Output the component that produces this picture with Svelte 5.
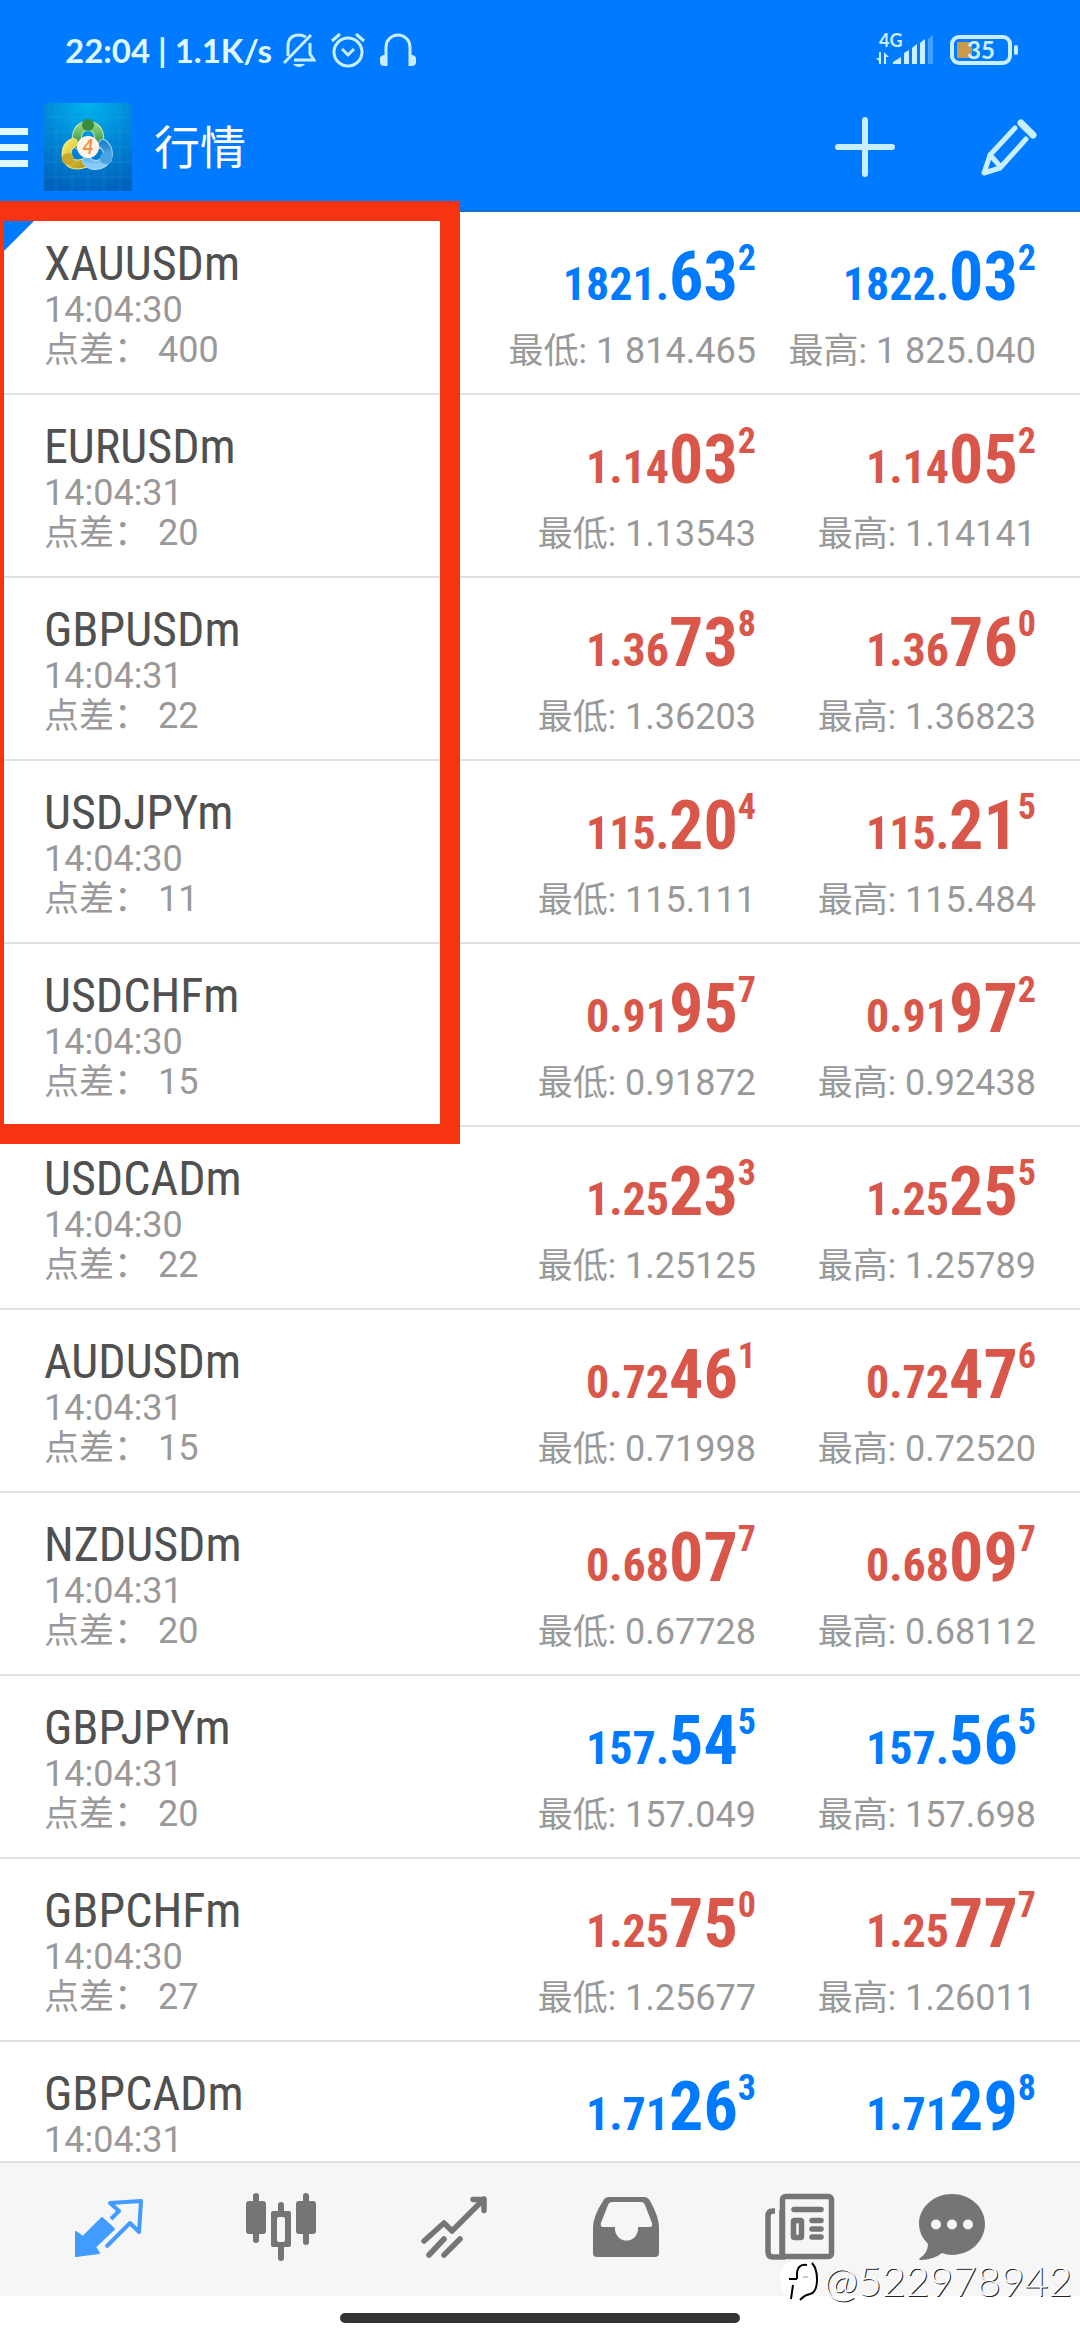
<script>
    const quotes = [
        { symbol: 'XAUUSDm', time: '14:04:30', spread: 400, up: true, bid: ['1821.', '63', '2'], ask: ['1822.', '03', '2'], low: '1 814.465', high: '1 825.040' },
        { symbol: 'EURUSDm', time: '14:04:31', spread: 20, up: false, bid: ['1.14', '03', '2'], ask: ['1.14', '05', '2'], low: '1.13543', high: '1.14141' },
        { symbol: 'GBPUSDm', time: '14:04:31', spread: 22, up: false, bid: ['1.36', '73', '8'], ask: ['1.36', '76', '0'], low: '1.36203', high: '1.36823' },
        { symbol: 'USDJPYm', time: '14:04:30', spread: 11, up: false, bid: ['115.', '20', '4'], ask: ['115.', '21', '5'], low: '115.111', high: '115.484' },
        { symbol: 'USDCHFm', time: '14:04:30', spread: 15, up: false, bid: ['0.91', '95', '7'], ask: ['0.91', '97', '2'], low: '0.91872', high: '0.92438' },
        { symbol: 'USDCADm', time: '14:04:30', spread: 22, up: false, bid: ['1.25', '23', '3'], ask: ['1.25', '25', '5'], low: '1.25125', high: '1.25789' },
        { symbol: 'AUDUSDm', time: '14:04:31', spread: 15, up: false, bid: ['0.72', '46', '1'], ask: ['0.72', '47', '6'], low: '0.71998', high: '0.72520' },
        { symbol: 'NZDUSDm', time: '14:04:31', spread: 20, up: false, bid: ['0.68', '07', '7'], ask: ['0.68', '09', '7'], low: '0.67728', high: '0.68112' },
        { symbol: 'GBPJPYm', time: '14:04:31', spread: 20, up: true, bid: ['157.', '54', '5'], ask: ['157.', '56', '5'], low: '157.049', high: '157.698' },
        { symbol: 'GBPCHFm', time: '14:04:30', spread: 27, up: false, bid: ['1.25', '75', '0'], ask: ['1.25', '77', '7'], low: '1.25677', high: '1.26011' },
        { symbol: 'GBPCADm', time: '14:04:31', up: true, bid: ['1.71', '26', '3'], ask: ['1.71', '29', '8'] }
    ];

    let tab = $state('quotes');
</script>

{#snippet price(parts, label, value)}
    <div class="price">
        <span class="lead">{parts[0]}</span><span class="pips">{parts[1]}</span><span class="point">{parts[2]}</span>
    </div>
    {#if value}
        <div class="range"><span class="label">{label}:</span> {value}</div>
    {/if}
{/snippet}

<div class="app">
    <header>
        <div class="status">
            <span class="clock">22:04 | 1.1K/s</span>
            <svg class="bell" width="34" height="36" viewBox="0 0 34 36" fill="none" stroke="currentColor" stroke-width="3">
                <path d="M6 24V14C6 6 11 3 17 3c3 0 5 1 7 2M28 11v11l4 6H12" />
                <path d="M2 31 29 3" />
                <path d="M11 32h12c-3 4-9 4-12 0z" fill="currentColor" stroke="none" />
            </svg>
            <svg class="alarm" width="36" height="36" viewBox="0 0 36 36" fill="none" stroke="currentColor" stroke-width="3">
                <circle cx="18" cy="20" r="14" />
                <path d="M2 9l8-7M34 9l-8-7M12 17l6 6 6-6" />
            </svg>
            <svg class="phones" width="36" height="36" viewBox="0 0 36 36" fill="none" stroke="currentColor" stroke-width="3">
                <path d="M6 34V15a12 12 0 0 1 24 0v19" />
                <path d="M7 23v11H5c-3 0-5-1-5-4v-3c0-3 2-4 5-4zM29 23v11h2c3 0 5-1 5-4v-3c0-3-2-4-5-4z" fill="currentColor" stroke="none" />
            </svg>
            <div class="network">
                <span class="lte">4G</span>
                <svg width="58" height="30" viewBox="0 0 58 30" fill="currentColor">
                    <path d="M3 17h2v12H3v-3l-3-3h3zM8 17l5 5h-3v7H8z" />
                    <path d="M17 29v-2l8-5v7zM28 29V18l5-3v14zM36 29V13l5-4v20zM44 29V8l5-4v25z" />
                    <path d="M52 29V4l5-4v29z" opacity=".35" />
                </svg>
            </div>
            <div class="battery"><span>35</span></div>
        </div>
        <div class="toolbar">
            <button class="menu" aria-label="菜单"><i></i><i></i><i></i></button>
            <svg class="logo" width="88" height="88" viewBox="0 0 88 88">
                <defs>
                    <radialGradient id="bg" cx=".5" cy="0" r="1">
                        <stop offset="0" stop-color="#00b4ec" />
                        <stop offset=".5" stop-color="#0089d8" />
                        <stop offset="1" stop-color="#0064bd" />
                    </radialGradient>
                    <linearGradient id="green" x2="0" y2="1"><stop stop-color="#8ed27a" /><stop offset="1" stop-color="#2f9440" /></linearGradient>
                    <linearGradient id="gold" x2="1" y2="1"><stop stop-color="#f4e460" /><stop offset="1" stop-color="#b99a1c" /></linearGradient>
                    <linearGradient id="sky" x2="0" y2="1"><stop stop-color="#2382cf" /><stop offset="1" stop-color="#86ccf5" /></linearGradient>
                </defs>
                <rect width="88" height="88" fill="url(#bg)" />
                <path d="M12 0v88M28 0v88M44 0v88M60 0v88M76 0v88M0 14h88M0 29h88M0 44h88M0 59h88M0 74h88" stroke="#4ac4ee" stroke-opacity=".18" />
                <g fill="none" stroke-linecap="round">
                    <path d="M44 23c-10 0-12 8-11 18M44 23c10 0 12 8 11 18" stroke="#c4e6b8" stroke-width="10" />
                    <path d="M44 23c-10 0-12 8-11 18M44 23c10 0 12 8 11 18" stroke="url(#green)" stroke-width="8" />
                    <path d="M29 40c-7 3-7 11-6 16M24 57c4 6 11 5 17 3" stroke="#efe88f" stroke-width="10" />
                    <path d="M29 40c-7 3-7 11-6 16M24 57c4 6 11 5 17 3" stroke="url(#gold)" stroke-width="8" />
                    <path d="M59 41c5 4 6 10 4 15M62 56c-4 7-14 8-19 2" stroke="#a9d8f8" stroke-width="10" />
                    <path d="M59 41c5 4 6 10 4 15M62 56c-4 7-14 8-19 2" stroke="url(#sky)" stroke-width="8" />
                </g>
                <circle cx="44" cy="22" r="6" fill="#3b8a3f" />
                <circle cx="24" cy="56" r="6" fill="#c6a92c" />
                <circle cx="62" cy="55" r="6" fill="#4aa2e2" />
                <circle cx="44" cy="44" r="11" fill="#fff5ec" />
                <text x="44" y="51" text-anchor="middle" class="four">4</text>
            </svg>
            <h1>行情</h1>
            <button aria-label="添加">
                <svg width="60" height="60" viewBox="0 0 60 60" stroke="currentColor" stroke-width="6" stroke-linecap="round"><path d="M30 3v54M3 30h54" /></svg>
            </button>
            <button aria-label="编辑">
                <svg width="60" height="60" viewBox="0 0 60 60" fill="none" stroke="currentColor" stroke-width="5" stroke-linecap="round" stroke-linejoin="round">
                    <path d="M37 11 12 38 6 56l16-5 26-29" />
                    <path d="M12 38l10 11" />
                    <path d="M43 6l12 12" stroke-width="7" />
                </svg>
            </button>
        </div>
    </header>

    <main>
        <div class="scroller">
            <table>
                <colgroup><col /><col class="bid" /><col class="ask" /></colgroup>
                <tbody>
                    {#each quotes as q}
                        <tr class:up={q.up}>
                            <td>
                                <div class="symbol">{q.symbol}</div>
                                <div class="meta">{q.time}</div>
                                {#if q.spread}
                                    <div class="meta"><span class="label">点差：</span> {q.spread}</div>
                                {/if}
                            </td>
                            <td class="num">{@render price(q.bid, '最低', q.low)}</td>
                            <td class="num">{@render price(q.ask, '最高', q.high)}</td>
                        </tr>
                    {/each}
                </tbody>
            </table>
        </div>
        <div class="corner"></div>
        <div class="highlight"></div>
    </main>

    <nav>
        <button class:active={tab === 'quotes'} onclick={() => (tab = 'quotes')} aria-label="行情">
            <svg viewBox="0 0 70 70" fill="currentColor" stroke="currentColor" stroke-linejoin="round">
                <path d="M3 40l7 5 19-19 12 11-19 18 4 6-23 3z" stroke-width="2" />
                <path d="M38 27l8-8-9-8 31-2-2 31-9-9-24 24" fill="none" stroke-width="4" />
            </svg>
        </button>
        <button class:active={tab === 'chart'} onclick={() => (tab = 'chart')} aria-label="图表">
            <svg viewBox="0 0 70 70" fill="currentColor">
                <rect x="7" y="1" width="6" height="50" rx="3" /><rect y="9" width="20" height="33" rx="3" />
                <rect x="57" y="1" width="6" height="52" rx="3" /><rect x="50" y="9" width="20" height="33" rx="3" />
                <rect x="32" y="10" width="6" height="14" rx="3" /><rect x="32" y="50" width="6" height="19" rx="3" />
                <path fill-rule="evenodd" d="M27 19h16q2 0 2 2v32q0 2-2 2H27q-2 0-2-2V21q0-2 2-2zm6 6q-2 0-2 2v21q0 2 2 2h4q2 0 2-2V27q0-2-2-2z" />
            </svg>
        </button>
        <button class:active={tab === 'trade'} onclick={() => (tab = 'trade')} aria-label="交易">
            <svg viewBox="0 0 70 70" fill="none" stroke="currentColor" stroke-width="5.5" stroke-linecap="round" stroke-linejoin="round">
                <path d="M5 49l20-18 8 8L65 7M54 7.500h11v11M25 47 10 63M41 47 25 63" />
            </svg>
        </button>
        <button class:active={tab === 'history'} onclick={() => (tab = 'history')} aria-label="历史">
            <svg viewBox="0 0 70 70" fill="currentColor">
                <path fill-rule="evenodd" d="M17 5h35q4 0 6 4 9 15 9 27v25q0 4-4 4H5q-4 0-4-4V36Q1 24 11 9q2-4 6-4zm3 5q-3 0-4 3L9 31q-1 4 2 4h12v2a11.500 11.500 0 0 0 23 0v-2h12q3 0 2-4l-7-18q-1-3-4-3z" />
            </svg>
        </button>
        <button class:active={tab === 'news'} onclick={() => (tab = 'news')} aria-label="新闻">
            <svg viewBox="0 0 70 70" fill="none" stroke="currentColor" stroke-width="5.500">
                <rect x="17.500" y="4.500" width="49" height="60" rx="3" />
                <path d="M10 19H8q-5 0-5 5v36q0 5 5 5h12" />
                <path d="M17 18v44" />
                <path d="M29 17.500h27M47 28.500h9M47 37h9M47 45h9" stroke-linecap="round" />
                <rect x="28.500" y="28.500" width="8" height="17" rx="1" />
            </svg>
        </button>
        <button class:active={tab === 'chat'} onclick={() => (tab = 'chat')} aria-label="消息">
            <svg viewBox="0 0 70 70" fill="currentColor">
                <path d="M35 2c18 0 33 13 33 30S53 63 35 63q-5 0-10-2-9 7-21 7-3 0-1-2 8-5 8-14Q2 43 2 32C2 15 17 2 35 2z" />
                <g fill="#f6f6f6"><circle cx="19" cy="32.500" r="5" /><circle cx="35" cy="32.500" r="5" /><circle cx="51" cy="32.500" r="5" /></g>
            </svg>
        </button>
        <div class="watermark">
            <svg width="40" height="44" viewBox="0 0 40 44" fill="none">
                <path d="M20 1c12 0 19 8 19 19S32 39 22 41q-22 0-22-21Q0 1 20 1z" fill="#fff" />
                <path d="M27 6c-6-1-10 2-10 9v5M13 26l-2 14M9 20h8M32 4c7 8 7 29-2 31-6 1-7 3-10 6" stroke="#000" stroke-width="2" />
                <path d="M23 18h5" stroke="#999" />
            </svg>
            <span>@522978942</span>
        </div>
    </nav>
    <footer><i></i></footer>
</div>

<style>
    :global(body) {
        margin: 0;
        background: #fff;
    }
    .app {
        display: flex;
        flex-direction: column;
        height: 100vh;
        font-family: Roboto, "Noto Sans CJK SC", sans-serif;
        color: #999;
    }
    button {
        display: flex;
        align-items: center;
        justify-content: center;
        padding: 0;
        border: none;
        background: none;
        color: inherit;
    }

    header {
        color: #c9efff;
        background: #007aff;
        border-bottom: 2px solid #1a6fcd;
    }
    .status {
        display: flex;
        align-items: center;
        height: 100px;
        padding: 0 68px 0 65px;
    }
    .clock {
        font: 700 33px/40px Lato, sans-serif;
        color: #dff8ff;
    }
    .bell {
        margin-left: 10px;
    }
    .alarm {
        margin-left: 14px;
    }
    .phones {
        margin-left: 14px;
    }
    .network {
        display: flex;
        flex-direction: column;
        position: relative;
        margin-left: auto;
    }
    .lte {
        position: absolute;
        left: 3px;
        top: -4px;
        font: 700 18px/18px Lato, sans-serif;
    }
    .battery {
        position: relative;
        box-sizing: border-box;
        width: 62px;
        height: 30px;
        margin-left: 16px;
        border: 4px solid;
        border-radius: 9px;
        background: linear-gradient(#c99a4c, #c99a4c) 3px center / 15px 16px no-repeat;
        font: 700 24px/22px Lato, sans-serif;
        text-align: center;
    }
    .battery::after {
        content: '';
        position: absolute;
        right: -10px;
        top: 6px;
        width: 4px;
        height: 10px;
        border-radius: 2px;
        background: currentColor;
    }
    .toolbar {
        display: flex;
        align-items: center;
        height: 94px;
        padding: 0 42px 16px 0;
    }
    .menu {
        flex-direction: column;
        gap: 9px;
        margin-right: 16px;
    }
    .menu i {
        width: 28px;
        height: 7px;
        background: #e2faff;
    }
    .four {
        font: italic 700 20px Lato, sans-serif;
        fill: #f2913d;
    }
    h1 {
        flex: 1;
        margin: 0;
        padding: 0 0 6px 22px;
        font: 400 46px/60px "Noto Sans CJK SC", sans-serif;
        color: #fff;
    }
    h1 ~ button + button {
        margin-left: 83px;
    }

    main {
        position: relative;
        flex: 1;
        min-height: 0;
    }
    .scroller {
        height: 100%;
        overflow: hidden;
    }
    table {
        width: 100%;
        border-spacing: 0;
        table-layout: fixed;
    }
    .bid {
        width: 280px;
    }
    .ask {
        width: 324px;
    }
    td {
        box-sizing: border-box;
        height: 183px;
        padding: 26px 0 0 44px;
        border-bottom: 2px solid #e2e2e2;
        vertical-align: top;
        white-space: nowrap;
    }
    td.num {
        padding: 29px 0 0;
        text-align: right;
    }
    td.num:last-child {
        padding-right: 44px;
    }
    .symbol {
        font: 400 48px/52px "Roboto Condensed", "Liberation Sans Narrow", Roboto, sans-serif;
        color: #505050;
    }
    .meta {
        font-size: 36px;
        line-height: 40px;
    }
    .label {
        font-size: 35px;
    }
    .price {
        font: 700 68px/72px "Roboto Condensed", "Liberation Sans Narrow", Roboto, sans-serif;
        color: #d9574a;
    }
    .up .price {
        color: #007aff;
    }
    .lead {
        font-size: 46px;
        line-height: 50px;
    }
    .point {
        font-size: 36px;
        line-height: 20px;
        vertical-align: 30px;
    }
    .range {
        margin-top: 18px;
        font-size: 36px;
        line-height: 40px;
    }
    .corner {
        position: absolute;
        left: 0;
        top: 0;
        width: 43px;
        height: 43px;
        background: #007aff;
        clip-path: polygon(0 0, 100% 0, 0 100%);
    }
    .highlight {
        position: absolute;
        box-sizing: border-box;
        left: 0;
        top: -11px;
        width: 460px;
        height: 943px;
        border: 20px solid #f73411;
        border-left-width: 4px;
        pointer-events: none;
    }

    nav {
        position: relative;
        display: grid;
        grid-template-columns: repeat(5, 173fr) 131fr;
        box-sizing: border-box;
        height: 135px;
        padding: 0 63px 6px 22px;
        border-top: 2px solid #e0e0e0;
        background: #f6f6f6;
        color: #757575;
    }
    nav button svg {
        width: 70px;
        height: 70px;
    }
    nav .active {
        color: #429bff;
    }
    .watermark {
        position: absolute;
        right: 8px;
        bottom: -9px;
        display: flex;
        align-items: center;
        gap: 4px;
        font: 300 41px/48px Lato, sans-serif;
        color: #fff;
        text-shadow: 1px 1px 0 #222;
    }
    footer {
        display: flex;
        justify-content: center;
        height: 44px;
    }
    footer i {
        width: 400px;
        height: 10px;
        margin-top: 17px;
        border-radius: 5px;
        background: #333;
    }
</style>
